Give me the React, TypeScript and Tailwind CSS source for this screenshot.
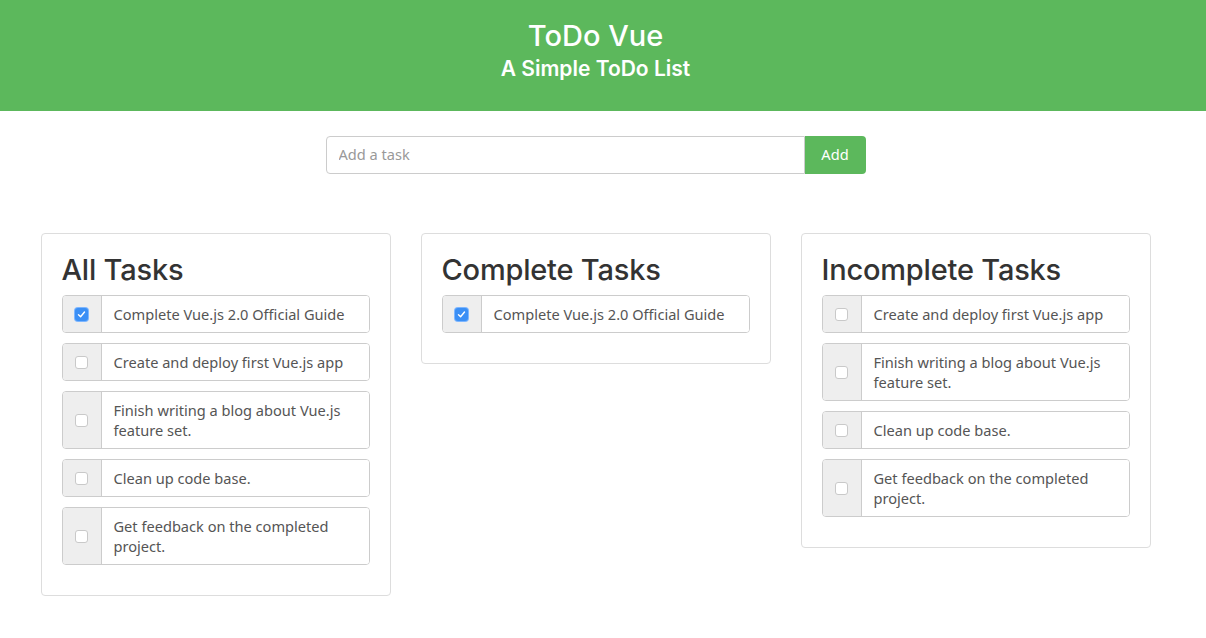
import React from "react";

const heading = { fontFamily: "Inter, 'Noto Sans', sans-serif" };
const body = { fontFamily: "'Noto Sans', 'Open Sans', sans-serif" };

function Check({ checked }: { checked: boolean }) {
  if (checked) {
    return (
      <div className="w-[13px] h-[13px] rounded-[3px] bg-[#3b8ff5] flex items-center justify-center shadow-[0_0_0_1px_#7db6ff]">
        <svg width="9" height="9" viewBox="0 0 9 9">
          <path d="M1.5 4.8 L3.6 6.8 L7.5 2" fill="none" stroke="white" strokeWidth="1.4" strokeLinecap="round" strokeLinejoin="round" />
        </svg>
      </div>
    );
  }
  return <div className="w-[13px] h-[13px] rounded-[3px] bg-white border border-[#c9c9c9]" />;
}

function Item({ text, checked }: { text: string; checked: boolean }) {
  return (
    <div className="flex w-[308px] min-h-[38px] rounded-[4px] border border-[#ccc] overflow-hidden">
      <div className="w-[39px] shrink-0 bg-[#eee] border-r border-[#ccc] flex items-center justify-center">
        <Check checked={checked} />
      </div>
      <div className="flex-1 bg-white px-[12px] py-[8px] text-[14.6px] leading-[20px] text-[#555]" style={body}>
        {text}
      </div>
    </div>
  );
}

function Card({ title, items }: { title: string; items: { t: string; c: boolean }[] }) {
  return (
    <div className="w-[350px] border border-[#ddd] rounded-[4px] bg-white px-[20px] pt-[19px] pb-[30px]">
      <h2 className="text-[29px] leading-[33px] font-medium text-[#333] mb-[9px] tracking-[-0.2px]" style={heading}>
        {title}
      </h2>
      <div className="flex flex-col gap-[10px]">
        {items.map((i) => (
          <Item key={i.t} text={i.t} checked={i.c} />
        ))}
      </div>
    </div>
  );
}

export default function App() {
  const all = [
    { t: "Complete Vue.js 2.0 Official Guide", c: true },
    { t: "Create and deploy first Vue.js app", c: false },
    { t: "Finish writing a blog about Vue.js feature set.", c: false },
    { t: "Clean up code base.", c: false },
    { t: "Get feedback on the completed project.", c: false },
  ];
  return (
    <div className="min-h-[638px] bg-white">
      <div className="bg-[#5cb85c] h-[111px]">
        <div className="w-[1191px] flex flex-col items-center pt-[19px] text-white" style={heading}>
          <div className="text-[29px] leading-[34px] font-medium">ToDo Vue</div>
          <div className="text-[21px] leading-[28px] font-semibold mt-[2px]">A Simple ToDo List</div>
        </div>
      </div>
      <div className="w-[1191px]">
        <div className="flex justify-center pt-[25px]">
          <div className="flex w-[540px] h-[38px]">
            <input
              placeholder="Add a task"
              className="flex-1 border border-[#ccc] rounded-l-[4px] px-[12px] text-[14.6px] text-[#555] placeholder:text-[#999] outline-none"
              style={body}
            />
            <button className="w-[61px] bg-[#5cb85c] text-white rounded-r-[4px] text-[14.6px]" style={body}>
              Add
            </button>
          </div>
        </div>
        <div className="flex justify-center gap-[30px] pt-[59px] items-start">
          <Card title="All Tasks" items={all} />
          <Card title="Complete Tasks" items={all.filter((i) => i.c)} />
          <Card title="Incomplete Tasks" items={all.filter((i) => !i.c)} />
        </div>
      </div>
    </div>
  );
}
